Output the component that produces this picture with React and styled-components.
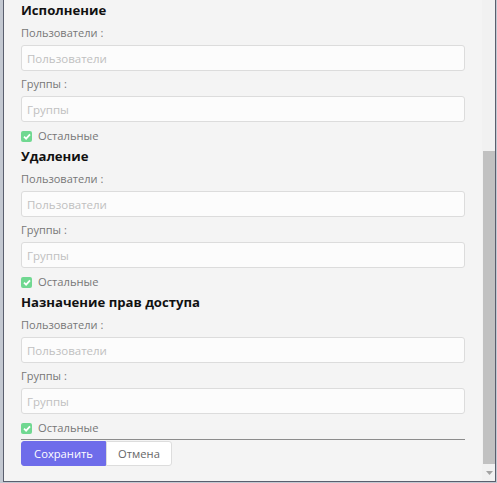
import React from 'react'
import styled, { createGlobalStyle } from 'styled-components'

const GlobalStyle = createGlobalStyle`
    html, body {
        margin: 0;
        padding: 0;
        background: #c3c8d1;
    }
    * {
        box-sizing: border-box;
    }
`

const Frame = styled.div`
    width: 497px;
    height: 483px;
    padding: 0 1px 1px 3px;
    background: #c3c8d1;
    font-family: "Open Sans", "Liberation Sans", sans-serif;
`

const Window = styled.div`
    height: 482px;
    display: flex;
    background: #f4f4f4;
    border-left: 1px solid #5a5f6e;
    border-right: 1px solid #5a5f6e;
    border-bottom: 1px solid #5a5f6e;
`

const Content = styled.div`
    flex: 1;
    padding: 0 17px;
    overflow: hidden;
`

const Section = styled.section`
    display: flex;
    flex-direction: column;
    padding-bottom: 1px;
`

const Heading = styled.h3`
    margin: 0 0 3px;
    height: 20px;
    line-height: 20px;
    font-size: 13.15px;
    font-weight: 700;
    color: #111;
`

const Label = styled.label`
    height: 20px;
    line-height: 20px;
    margin-bottom: 2px;
    font-size: 11px;
    color: #777;
`

const Colon = styled.span`
    margin-left: 3px;
`

const Input = styled.input`
    height: 26px;
    width: 100%;
    margin: 0 0 3px;
    padding: 0 5px;
    border: 1px solid #dcdcdc;
    border-radius: 3px;
    background: #fcfcfc;
    font-family: inherit;
    font-size: 11.5px;
    color: #333;
    outline: none;

    &::placeholder {
        color: #c0c0c0;
    }
`

const CheckRow = styled.div`
    height: 20px;
    display: flex;
    align-items: center;
    gap: 6px;
    font-size: 11.2px;
    color: #777;
`

const Box = styled.span`
    width: 11px;
    height: 11px;
    margin-top: 2px;
    border-radius: 2px;
    background: #70d891;
    display: flex;
    align-items: center;
    justify-content: center;
`

const Footer = styled.div`
    margin-top: 1px;
    border-top: 1px solid #8c8c8c;
    padding-top: 1px;
    display: flex;
`

const Button = styled.button`
    height: 25px;
    padding: 0;
    font-family: inherit;
    font-size: 11.2px;
    cursor: pointer;
    border: 1px solid ${p => (p.$primary ? '#6e6cea' : '#dddddd')};
    background: ${p => (p.$primary ? '#6e6cea' : '#ffffff')};
    color: ${p => (p.$primary ? '#ffffff' : '#666666')};
    border-radius: ${p => (p.$primary ? '3px 0 0 3px' : '0 3px 3px 0')};
    width: ${p => p.$w}px;
`

const Gutter = styled.div`
    width: 13px;
    background: #f1f1f1;
    display: flex;
    flex-direction: column;
    padding-top: 151px;
`

const Thumb = styled.div`
    margin-left: 1px;
    height: 313px;
    background: #c1c1c1;
`

const Arrow = styled.div`
    flex: 1;
    display: flex;
    align-items: center;
    justify-content: center;
    padding-left: 1px;
`

const Check = () => (
    <svg width="8" height="7" viewBox="0 0 8 7">
        <path d="M1 3.6 L3.1 5.6 L7 1.4" fill="none" stroke="#fff" strokeWidth="1.8" />
    </svg>
)

const sections = ['Исполнение', 'Удаление', 'Назначение прав доступа']

function Rights({ title }) {
    return (
        <Section>
            <Heading>{title}</Heading>
            <Label>Пользователи<Colon>:</Colon></Label>
            <Input placeholder="Пользователи" />
            <Label>Группы<Colon>:</Colon></Label>
            <Input placeholder="Группы" />
            <CheckRow>
                <Box><Check /></Box>
                Остальные
            </CheckRow>
        </Section>
    )
}

export default function App() {
    return (
        <>
            <GlobalStyle />
            <Frame>
                <Window>
                    <Content>
                        {sections.map(s => <Rights key={s} title={s} />)}
                        <Footer>
                            <Button $primary $w={85}>Сохранить</Button>
                            <Button $w={66}>Отмена</Button>
                        </Footer>
                    </Content>
                    <Gutter>
                        <Thumb />
                        <Arrow>
                            <svg width="7" height="4" viewBox="0 0 7 4">
                                <path d="M0 0 H7 L3.5 4 Z" fill="#a3a3a3" />
                            </svg>
                        </Arrow>
                    </Gutter>
                </Window>
            </Frame>
        </>
    )
}
